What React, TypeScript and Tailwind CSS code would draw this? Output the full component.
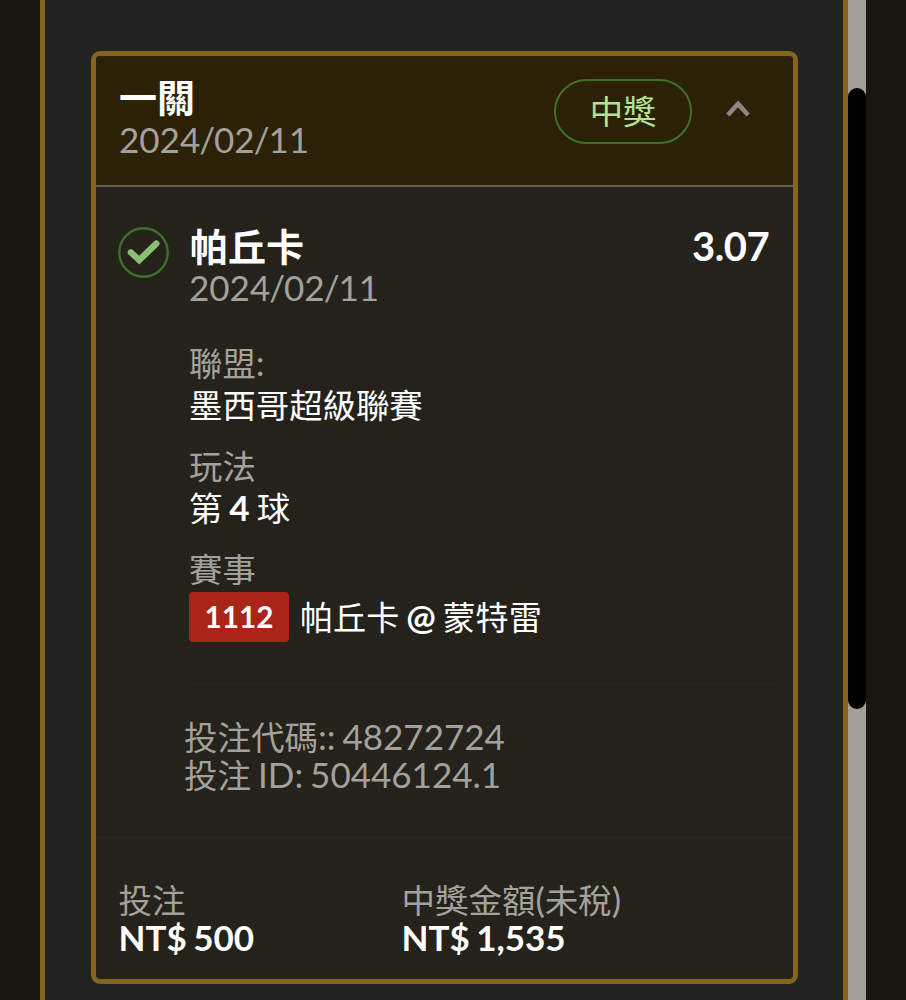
import React from 'react';

type TextProps = { children: React.ReactNode; className: string };

function Line({ children, className }: TextProps) {
  return <div className={`whitespace-nowrap ${className}`}>{children}</div>;
}

function Latin({ children }: { children: React.ReactNode }) {
  return <span className="text-[35px] leading-none [word-spacing:-2px]">{children}</span>;
}

function BetDate() {
  return (
    <Line className="text-[35px] leading-[42px] text-[#a3a19b]">
      2024<span className="-mx-px">/</span>02<span className="-mx-px">/</span>11
    </Line>
  );
}

export default function App() {
  return (
    <div className="flex h-[1000px] w-[906px] overflow-hidden bg-[#1a1710] font-['Lato','Noto_Sans_CJK_TC',sans-serif] text-white">
      <div className="w-10 shrink-0" />
      <div className="flex w-[808px] shrink-0 border-l-[5px] border-r-[5px] border-[#84641f] bg-[#222222] pl-[46px] pt-[51px]">
        <section className="flex h-[933px] w-[707px] flex-col overflow-hidden rounded-[9px] border-[5px] border-[#84641f] bg-[#25221c]">
          <header className="flex h-[131px] shrink-0 border-b-2 border-[#665e50] bg-[#2b2106] pl-[23px]">
            <div className="w-[435px] pt-[21px]">
              <Line className="text-[38px] font-bold leading-[41px]">一關</Line>
              <BetDate />
            </div>
            <div className="mt-[23px] flex h-[65px] w-[138px] items-center justify-center rounded-full border-2 border-[#3f702b] text-[33.3px] text-[#b4e294]">中獎</div>
            <svg className="ml-[34px] mt-[42px] h-6 w-6" viewBox="0 0 24 24" fill="none" stroke="#8b8784" strokeWidth="4.6"><path d="M1.8 17 12 6 22.2 17" /></svg>
          </header>
          <div className="flex h-[108px] shrink-0 pl-[22px] pt-[39px]">
            <svg className="mt-px h-[51px] w-[51px]" viewBox="0 0 51 51" fill="none"><circle cx="25.5" cy="25.5" r="24.2" stroke="#3b702b" strokeWidth="2.4" /><path d="m12.9 25.5 8.4 7.6 17-16.5" stroke="#8abf70" strokeWidth="6.4" strokeLinecap="round" /></svg>
            <div className="ml-[21px] w-[502px]">
              <Line className="text-[38px] font-bold leading-[40px]">帕丘卡</Line>
              <div className="-ml-px"><BetDate /></div>
            </div>
            <Line className="text-[40px] font-bold leading-[40px] tracking-[-0.5px]">3.07</Line>
          </div>
          <div className="ml-[92px] h-[390px] w-[588px] shrink-0 border-b border-[#2b2822] pl-px pt-[47px] text-[33.4px]">
            <Line className="leading-[42px] text-[#a3a19b]">聯盟<Latin>:</Latin></Line>
            <Line className="leading-[42px]">墨西哥超級聯賽</Line>
            <Line className="mt-[19px] leading-[42px] text-[#a3a19b]">玩法</Line>
            <Line className="leading-[42px]">第<Latin> <b>4</b> </Latin>球</Line>
            <Line className="mt-[19px] leading-[42px] text-[#a3a19b]">賽事</Line>
            <div className="mt-[2px] flex h-[50px] items-center">
              <span className="mr-[11px] flex h-[50px] w-[100px] items-center justify-center rounded-[4px] bg-[#aa2419] text-[29.7px] font-bold">1112</span>
              <Line className="text-[33.2px] leading-[42px] tracking-[-0.1px]">帕丘卡<Latin> <b>@</b> </Latin>蒙特雷</Line>
            </div>
          </div>
          <div className="h-[153px] shrink-0 border-b border-[#2b2822] pl-[88px] pt-[33px] text-[33.5px] text-[#a3a19b]">
            <Line className="leading-[38px]">投注代碼<Latin>:: 48272724</Latin></Line>
            <Line className="leading-[38px]">投注<Latin> ID: 50446124.1</Latin></Line>
          </div>
          <footer className="flex pl-[22.5px] pt-[43px] text-[33.5px]">
            <div className="w-[283px]">
              <Line className="leading-[38px] text-[#a3a19b]">投注</Line>
              <Line className="text-[35px] font-bold leading-[36px] [word-spacing:-2px]">NT$ 500</Line>
            </div>
            <div>
              <Line className="leading-[38px] text-[#a3a19b]">中獎金額<Latin>(</Latin>未稅<Latin>)</Latin></Line>
              <Line className="text-[35px] font-bold leading-[36px] [word-spacing:-2px]">NT$ 1,535</Line>
            </div>
          </footer>
        </section>
      </div>
      <div className="h-full w-[18px] shrink-0 bg-[#a1a097] pt-[88px]"><div className="h-[621px] rounded-full bg-black" /></div>
    </div>
  );
}
